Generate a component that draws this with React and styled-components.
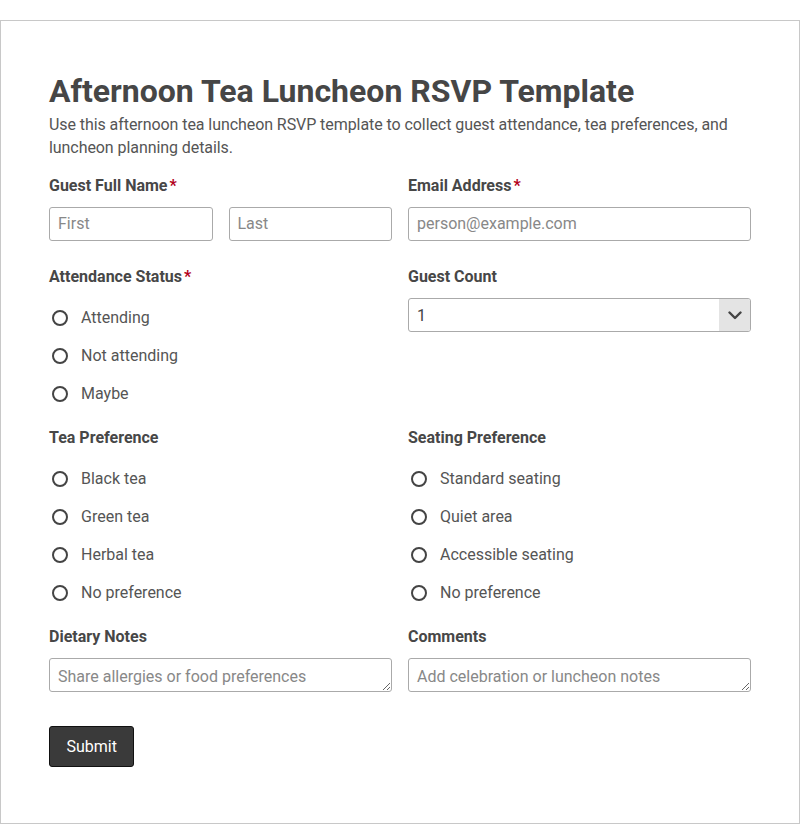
import React from 'react';
import styled, { createGlobalStyle } from 'styled-components';

const GlobalStyle = createGlobalStyle`
  html, body {
    margin: 0;
    padding: 0;
    background: #fff;
  }
  body {
    font-family: Roboto, "Liberation Sans", Arial, sans-serif;
    color: #444;
  }
  * { box-sizing: border-box; }
`;

const teaOptions = ['Black tea', 'Green tea', 'Herbal tea', 'No preference'];
const seatOptions = ['Standard seating', 'Quiet area', 'Accessible seating', 'No preference'];
const attendOptions = ['Attending', 'Not attending', 'Maybe'];

function RadioGroup({ name, options }) {
  return (
    <Options>
      {options.map((o) => (
        <Option key={o}>
          <RadioInput type="radio" name={name} value={o} />
          <span>{o}</span>
        </Option>
      ))}
    </Options>
  );
}

export default function App() {
  return (
    <>
      <GlobalStyle />
      <Frame>
        <Title>Afternoon Tea Luncheon RSVP Template</Title>
        <Intro>
          Use this afternoon tea luncheon RSVP template to collect guest attendance, tea preferences, and
          luncheon planning details.
        </Intro>

        <Grid>
          <Field>
            <Label>Guest Full Name<Req>*</Req></Label>
            <Pair>
              <TextInput placeholder="First" />
              <TextInput placeholder="Last" />
            </Pair>
          </Field>
          <Field>
            <Label>Email Address<Req>*</Req></Label>
            <TextInput type="email" placeholder="person@example.com" />
          </Field>

          <Field>
            <Label>Attendance Status<Req>*</Req></Label>
            <RadioGroup name="attendance" options={attendOptions} />
          </Field>
          <Field>
            <Label>Guest Count</Label>
            <SelectWrap>
              <Select defaultValue="1">
                <option>1</option>
                <option>2</option>
                <option>3</option>
                <option>4</option>
              </Select>
              <Chevron>
                <svg width="14" height="9" viewBox="0 0 14 9" fill="none">
                  <path d="M1.5 1.5 L7 7 L12.5 1.5" stroke="#444" strokeWidth="2.4" strokeLinecap="round" strokeLinejoin="round" />
                </svg>
              </Chevron>
            </SelectWrap>
          </Field>

          <Field>
            <Label>Tea Preference</Label>
            <RadioGroup name="tea" options={teaOptions} />
          </Field>
          <Field>
            <Label>Seating Preference</Label>
            <RadioGroup name="seating" options={seatOptions} />
          </Field>

          <Field>
            <Label>Dietary Notes</Label>
            <TextArea rows={1} placeholder="Share allergies or food preferences" />
          </Field>
          <Field>
            <Label>Comments</Label>
            <TextArea rows={1} placeholder="Add celebration or luncheon notes" />
          </Field>
        </Grid>

        <SubmitButton type="button">Submit</SubmitButton>
      </Frame>
    </>
  );
}

const Frame = styled.div`
  margin-top: 20px;
  width: 800px;
  border: 1px solid #c8c8c8;
  padding: 51px 48px 56px;
`;

const Title = styled.h1`
  margin: 0 0 3px;
  font-size: 32px;
  line-height: 38px;
  font-weight: 700;
  color: #464646;
`;

const Intro = styled.p`
  margin: 0 0 16px;
  font-size: 16px;
  line-height: 23px;
  color: #555;
  letter-spacing: -0.07px;
`;

const Grid = styled.div`
  display: grid;
  grid-template-columns: 1fr 1fr;
  column-gap: 16px;
  row-gap: 25px;
`;

const Field = styled.div`
  display: flex;
  flex-direction: column;
  min-width: 0;
`;

const Label = styled.label`
  font-size: 16px;
  line-height: 22px;
  font-weight: 700;
  color: #474747;
  margin-bottom: 10px;
`;

const Req = styled.span`
  color: #b3001b;
  margin-left: 2px;
`;

const Pair = styled.div`
  display: grid;
  grid-template-columns: 1fr 1fr;
  gap: 16px;
`;

const TextInput = styled.input`
  width: 100%;
  height: 34px;
  padding: 0 8px 1px;
  border: 1px solid #aaa;
  border-radius: 3px;
  font-family: inherit;
  font-size: 16px;
  color: #444;
  background: #fff;
  &::placeholder { color: #888; }
`;

const TextArea = styled.textarea`
  width: 100%;
  height: 34px;
  padding: 8px 8px 4px;
  border: 1px solid #aaa;
  border-radius: 3px;
  font-family: inherit;
  font-size: 16px;
  line-height: 20px;
  color: #444;
  resize: vertical;
  display: block;
  &::placeholder { color: #888; }
`;

const SelectWrap = styled.div`
  position: relative;
  height: 34px;
`;

const Select = styled.select`
  appearance: none;
  width: 100%;
  height: 34px;
  padding: 0 40px 0 8px;
  border: 1px solid #aaa;
  border-radius: 3px;
  background: #fff;
  font-family: inherit;
  font-size: 16px;
  color: #444;
`;

const Chevron = styled.span`
  position: absolute;
  top: 1px;
  right: 1px;
  bottom: 1px;
  width: 31px;
  background: #e4e4e4;
  border-radius: 0 2px 2px 0;
  display: flex;
  align-items: center;
  justify-content: center;
  pointer-events: none;
`;

const Options = styled.div`
  display: flex;
  flex-direction: column;
  gap: 22px;
  padding-top: 12px;
`;

const Option = styled.label`
  display: flex;
  align-items: center;
  gap: 13px;
  height: 16px;
  font-size: 16px;
  line-height: 16px;
  color: #555;
  padding-left: 3px;
`;

const RadioInput = styled.input`
  appearance: none;
  margin: 0;
  width: 16px;
  height: 16px;
  border: 2px solid #444;
  border-radius: 50%;
  background: #fff;
  flex: none;
`;

const SubmitButton = styled.button`
  margin-top: 34px;
  height: 41px;
  padding: 0 16.5px;
  background: #3a3a3a;
  color: #fff;
  border: 1px solid #111;
  border-radius: 3px;
  font-family: inherit;
  font-size: 16px;
`;
